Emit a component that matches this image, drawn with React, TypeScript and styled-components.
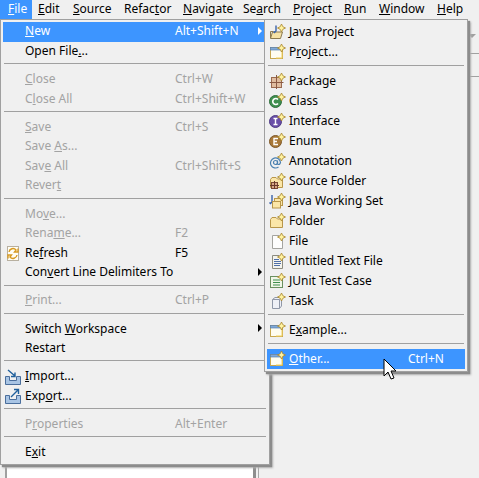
import React, { FunctionComponent } from 'react';
import styled, { createGlobalStyle } from 'styled-components';

const GlobalStyle = createGlobalStyle`
  html, body {
    margin: 0;
    padding: 0;
    height: 100%;
    background: #f0f0f0;
  }
`;

const Page = styled.div`
  position: relative;
  width: 479px;
  height: 478px;
  overflow: hidden;
  display: flex;
  flex-direction: column;
  background: #f0f0f0;
  font-family: 'Noto Sans', 'Liberation Sans', sans-serif;
  font-size: 12px;
  color: #000;
`;

const MenuBar = styled.div`
  display: flex;
  height: 19px;
  flex: none;
`;

const BarItem = styled.div<{ $active?: boolean; $width: number }>`
  width: ${(p) => p.$width}px;
  padding-left: ${(p) => (p.$active ? 8 : 6)}px;
  box-sizing: border-box;
  line-height: 18px;
  white-space: nowrap;
  background: ${(p) => (p.$active ? '#3d95ff' : 'transparent')};
  color: ${(p) => (p.$active ? '#fff' : '#000')};
`;

const Workspace = styled.div`
  flex: 1;
  display: flex;
  min-height: 0;
`;

const EditorColumn = styled.div`
  width: 251px;
  margin-left: 5px;
  box-sizing: border-box;
  background: #fff;
  border-left: 2px solid #a0a0a0;
  border-right: 3px solid #8e8e8e;
`;

const SideColumn = styled.div`
  flex: 1;
  margin-left: 2px;
  border-left: 1px solid #a8a8a8;
  display: flex;
  flex-direction: column;
  align-items: flex-end;
`;

const ViewTabs = styled.div`
  width: 12px;
  height: 34px;
  border-bottom: 1px solid #a0a0a0;
  position: relative;
`;

const ViewToolbar = styled.div`
  width: 12px;
  height: 22px;
  border-bottom: 1px solid #a0a0a0;
`;

const ViewMenuArrow = styled.div`
  position: absolute;
  left: 1px;
  top: 15px;
  border-left: 4px solid transparent;
  border-right: 4px solid transparent;
  border-top: 4px solid #a0a0a0;
`;

const Flyout = styled.div<{ $left: number; $width: number; $gutter: number }>`
  position: absolute;
  top: 19px;
  left: ${(p) => p.$left}px;
  width: ${(p) => p.$width}px;
  box-sizing: border-box;
  padding: 2px ${(p) => p.$gutter}px 2px;
  background: #f0f0f0;
  border: 1px solid #a0a0a0;
  box-shadow: 2px 2px 1px #8c8c8c, 3px 3px 2px #b4b4b4;
`;

const Row = styled.div<{ $height: number; $active?: boolean; $disabled?: boolean; $columns: string }>`
  position: relative;
  display: grid;
  grid-template-columns: ${(p) => p.$columns};
  align-items: center;
  height: ${(p) => p.$height}px;
  line-height: 17px;
  white-space: nowrap;
  background: ${(p) => (p.$active ? '#3d95ff' : 'transparent')};
  color: ${(p) => (p.$active ? '#fff' : p.$disabled ? '#a3a3a3' : '#000')};
`;

const IconSlot = styled.span`
  display: flex;
  align-items: center;
  padding-left: 2px;
  height: 16px;
`;

const Label = styled.span<{ $lift: number }>`
  padding-bottom: ${(p) => p.$lift}px;
`;

const Shortcut = styled.span<{ $lift: number }>`
  padding-bottom: ${(p) => p.$lift}px;
`;

const SubArrow = styled.span<{ $color: string; $right: number }>`
  position: absolute;
  right: ${(p) => p.$right}px;
  top: 50%;
  margin-top: -5px;
  border-top: 4px solid transparent;
  border-bottom: 4px solid transparent;
  border-left: 4px solid ${(p) => p.$color};
`;

const Separator = styled.div<{ $height: number; $inset: number; $offset: number }>`
  height: ${(p) => p.$height}px;
  padding-top: ${(p) => p.$offset}px;
  box-sizing: border-box;
  margin: 0 ${(p) => p.$inset}px;

  &::after {
    content: '';
    display: block;
    height: 1px;
    background: #a0a0a0;
  }
`;

const Pointer = styled.svg`
  position: absolute;
  left: 383px;
  top: 358px;
`;

// "Alt+&Shift" style: the character after & gets the mnemonic underline
const mnemonic = (text: string) => {
  const i = text.indexOf('&');
  if (i < 0) return text;
  return (
    <>
      {text.slice(0, i)}
      <u>{text[i + 1]}</u>
      {text.slice(i + 2)}
    </>
  );
};

const Star = () => (
  <path
    d="M12.5 0 L13.8 2.7 L16.5 4 L13.8 5.3 L12.5 8 L11.2 5.3 L8.5 4 L11.2 2.7 Z"
    fill="#fff3a0"
    stroke="#a8842a"
    strokeWidth="0.8"
  />
);

const Svg: FunctionComponent<{ children: React.ReactNode }> = ({ children }) => (
  <svg width="17" height="16" viewBox="0 0 17 16">
    {children}
  </svg>
);

const Ball: FunctionComponent<{ fill: string; edge: string; children: React.ReactNode }> = ({
  fill,
  edge,
  children,
}) => (
  <Svg>
    <circle cx="6.5" cy="8.5" r="6" fill={fill} stroke={edge} />
    {children}
    <Star />
  </Svg>
);

const WindowIcon = () => (
  <Svg>
    <rect x="1.5" y="3.5" width="12" height="11" fill="#fffdf0" stroke="#c8a850" />
    <rect x="1.5" y="3.5" width="10" height="2.5" fill="#7fa8d8" stroke="#5a80b0" strokeWidth="0.7" />
    <path d="M13 8 V14 H7" fill="none" stroke="#f0d060" />
    <Star />
  </Svg>
);

const FolderShape = () => (
  <path
    d="M1.5 14.5 V6.5 L3 4.5 H7 L8.5 6 H13.5 V14.5 Z"
    fill="#fbe6a8"
    stroke="#b8964a"
  />
);

const icons: Record<string, React.ReactNode> = {
  javaProject: (
    <Svg>
      <path d="M1.5 14.5 L3.5 8 H13.5 L11.5 14.5 Z" fill="#f6e2a6" stroke="#8c7a50" />
      <path d="M1.5 14 V7.5 H4" fill="none" stroke="#8c7a50" />
      <path d="M7 1.5 V7 L5.5 8.5 L4.5 7.5" fill="none" stroke="#3a62a8" strokeWidth="1.4" />
      <Star />
    </Svg>
  ),
  window: <WindowIcon />,
  package: (
    <Svg>
      <rect x="2.5" y="4.5" width="10" height="10" fill="#e0bda0" stroke="#9a6a50" />
      <path d="M7.5 2 V16 M0.5 9.5 H14.5" stroke="#8a5a44" />
      <Star />
    </Svg>
  ),
  cls: (
    <Ball fill="#3f8f4f" edge="#2e6e3c">
      <path d="M9 6.5 A3 3 0 1 0 9 10.5" fill="none" stroke="#fff" strokeWidth="1.6" />
    </Ball>
  ),
  iface: (
    <Ball fill="#6a4fa8" edge="#4f3a85">
      <path d="M4.5 5.5 H8.5 M6.5 5.5 V11.5 M4.5 11.5 H8.5" fill="none" stroke="#fff" strokeWidth="1.4" />
    </Ball>
  ),
  enumType: (
    <Ball fill="#a87838" edge="#7e5828">
      <path d="M9 5.5 H5 V11.5 H9 M5 8.5 H8" fill="none" stroke="#fff" strokeWidth="1.4" />
    </Ball>
  ),
  annotation: (
    <Svg>
      <circle cx="6.5" cy="9.5" r="2" fill="none" stroke="#4a80b0" strokeWidth="1.2" />
      <path d="M8.5 7.5 V11 Q10.5 12.5 11.5 9.5 A5 5 0 1 0 9.5 14" fill="none" stroke="#4a80b0" strokeWidth="1.2" />
      <Star />
    </Svg>
  ),
  sourceFolder: (
    <Svg>
      <FolderShape />
      <rect x="2.5" y="9.5" width="6" height="6" fill="#d8a888" stroke="#7a4a34" />
      <path d="M5.5 8 V16 M1 12.5 H10" stroke="#6a3a2a" />
      <Star />
    </Svg>
  ),
  workingSet: (
    <Svg>
      <path d="M3 2 V9 L1.5 10.5 L0.5 9.5" fill="none" stroke="#3a62a8" strokeWidth="1.4" />
      <rect x="5.5" y="5.5" width="8" height="7" fill="#fbe6a8" stroke="#b8964a" />
      <rect x="3.5" y="8.5" width="8" height="6.5" fill="#fbe6a8" stroke="#b8964a" />
      <Star />
    </Svg>
  ),
  folder: (
    <Svg>
      <FolderShape />
      <Star />
    </Svg>
  ),
  file: (
    <Svg>
      <path d="M3.5 2.5 H10 L13.5 6 V15.5 H3.5 Z" fill="#fdfdfd" stroke="#a4a4a0" />
      <Star />
    </Svg>
  ),
  textFile: (
    <Svg>
      <path d="M3.5 2.5 H10 L13.5 6 V15.5 H3.5 Z" fill="#f4f4ee" stroke="#8c8c80" />
      <path d="M5 6.5 H10 M5 8.5 H12 M5 10.5 H12 M5 12.5 H11" stroke="#5070a8" />
      <Star />
    </Svg>
  ),
  junit: (
    <Svg>
      <rect x="1.5" y="3.5" width="12" height="11" fill="#f0f6e8" stroke="#6a9060" />
      <path d="M4 7 H11 M4 9.5 H11 M4 12 H11" stroke="#3f8f4f" />
      <Star />
    </Svg>
  ),
  task: (
    <Svg>
      <path d="M3.5 6.5 L6 4.5 H12.5 V13 L10.5 15.5 H3.5 Z" fill="#eef0f6" stroke="#9098a8" />
      <path d="M3.5 6.5 H10.5 V15.5 M10.5 6.5 L12.5 4.5" fill="none" stroke="#9098a8" />
      <Star />
    </Svg>
  ),
  refresh: (
    <Svg>
      <rect x="2.5" y="1.5" width="11" height="14" fill="#fffdf4" stroke="#b8b0a0" />
      <path d="M4 7 A4 4 0 0 1 11 5 L9.5 7 H13 V3.5" fill="none" stroke="#d89a20" strokeWidth="1.4" />
      <path d="M12 10 A4 4 0 0 1 5 12 L6.5 10 H3 V13.5" fill="none" stroke="#d89a20" strokeWidth="1.4" />
    </Svg>
  ),
  importIcon: (
    <Svg>
      <path d="M0.5 7.5 H4.5 V11.5 H11.5 V7.5 H15.5 V15.5 H0.5 Z" fill="#a8c4e4" stroke="#4a6e9c" />
      <path d="M3 1 L10 7 M10 3.5 V7.5 H6" fill="none" stroke="#1f5f9c" strokeWidth="1.4" />
    </Svg>
  ),
  exportIcon: (
    <Svg>
      <path d="M0.5 7.5 H4.5 V11.5 H11.5 V7.5 H15.5 V15.5 H0.5 Z" fill="#a8c4e4" stroke="#4a6e9c" />
      <path d="M6 9 L13 2 M9 1.5 H13.5 V6" fill="none" stroke="#1f5f9c" strokeWidth="1.4" />
    </Svg>
  ),
};

interface MenuEntry {
  label?: string;
  icon?: string;
  shortcut?: string;
  disabled?: boolean;
  active?: boolean;
  submenu?: boolean;
}

const SEP: MenuEntry = {};

const barItems = [
  { label: '&File', width: 32, active: true },
  { label: '&Edit', width: 35 },
  { label: '&Source', width: 51 },
  { label: 'Refac&tor', width: 59 },
  { label: '&Navigate', width: 60 },
  { label: 'Se&arch', width: 50 },
  { label: '&Project', width: 51 },
  { label: '&Run', width: 35 },
  { label: '&Window', width: 58 },
  { label: '&Help', width: 40 },
];

const fileEntries: MenuEntry[] = [
  { label: '&New', shortcut: 'Alt+Shift+N', active: true, submenu: true },
  { label: 'Open File&...' },
  SEP,
  { label: '&Close', shortcut: 'Ctrl+W', disabled: true },
  { label: 'C&lose All', shortcut: 'Ctrl+Shift+W', disabled: true },
  SEP,
  { label: '&Save', shortcut: 'Ctrl+S', disabled: true },
  { label: 'Save &As...', disabled: true },
  { label: 'Sav&e All', shortcut: 'Ctrl+Shift+S', disabled: true },
  { label: 'Rever&t', disabled: true },
  SEP,
  { label: 'Mo&ve...', disabled: true },
  { label: 'Rena&me...', shortcut: 'F2', disabled: true },
  { label: 'Re&fresh', shortcut: 'F5', icon: 'refresh' },
  { label: 'Con&vert Line Delimiters To', submenu: true },
  SEP,
  { label: '&Print...', shortcut: 'Ctrl+P', disabled: true },
  SEP,
  { label: 'Switch &Workspace', submenu: true },
  { label: 'Restart' },
  SEP,
  { label: '&Import...', icon: 'importIcon' },
  { label: 'Exp&ort...', icon: 'exportIcon' },
  SEP,
  { label: 'P&roperties', shortcut: 'Alt+Enter', disabled: true },
  SEP,
  { label: 'E&xit' },
];

const newEntries: MenuEntry[] = [
  { label: 'Java Project', icon: 'javaProject' },
  { label: 'P&roject...', icon: 'window' },
  SEP,
  { label: 'Package', icon: 'package' },
  { label: 'Class', icon: 'cls' },
  { label: 'Interface', icon: 'iface' },
  { label: 'Enum', icon: 'enumType' },
  { label: 'Annotation', icon: 'annotation' },
  { label: 'Source Folder', icon: 'sourceFolder' },
  { label: 'Java Working Set', icon: 'workingSet' },
  { label: 'Folder', icon: 'folder' },
  { label: 'File', icon: 'file' },
  { label: 'Untitled Text File', icon: 'textFile' },
  { label: 'JUnit Test Case', icon: 'junit' },
  { label: 'Task', icon: 'task' },
  SEP,
  { label: 'E&xample...', icon: 'window' },
  SEP,
  { label: '&Other...', shortcut: 'Ctrl+N', icon: 'window', active: true },
];

interface MenuProps {
  entries: MenuEntry[];
  left: number;
  width: number;
  rowHeight: number;
  textLift: number;
  sepHeight: number;
  sepOffset: number;
  columns: string;
}

const Menu: FunctionComponent<MenuProps> = ({
  entries,
  left,
  width,
  rowHeight,
  textLift,
  sepHeight,
  sepOffset,
  columns,
}) => (
  <Flyout $left={left} $width={width} $gutter={2}>
    {entries.map((entry, i) =>
      entry.label ? (
        <Row
          key={i}
          $height={rowHeight}
          $active={entry.active}
          $disabled={entry.disabled}
          $columns={columns}
        >
          <IconSlot>{entry.icon && icons[entry.icon]}</IconSlot>
          <Label $lift={textLift}>{mnemonic(entry.label)}</Label>
          <Shortcut $lift={textLift}>{entry.shortcut}</Shortcut>
          {entry.submenu && <SubArrow $right={5} $color={entry.active ? '#fff' : '#000'} />}
        </Row>
      ) : (
        <Separator key={i} $height={sepHeight} $offset={sepOffset} $inset={1} />
      ),
    )}
  </Flyout>
);

export default function App() {
  return (
    <Page>
      <GlobalStyle />
      <MenuBar>
        {barItems.map((item) => (
          <BarItem key={item.label} $active={item.active} $width={item.width}>
            {mnemonic(item.label)}
          </BarItem>
        ))}
      </MenuBar>
      <Workspace>
        <EditorColumn />
        <SideColumn>
          <ViewTabs>
            <ViewMenuArrow />
          </ViewTabs>
          <ViewToolbar />
        </SideColumn>
      </Workspace>
      <Menu
        entries={fileEntries}
        left={0}
        width={270}
        rowHeight={19.6}
        textLift={2}
        sepHeight={8.5}
        sepOffset={2}
        columns="22px 150px 1fr"
      />
      <Menu
        entries={newEntries}
        left={264}
        width={204}
        rowHeight={20}
        textLift={1}
        sepHeight={9}
        sepOffset={3}
        columns="22px 119px 1fr"
      />
      <Pointer width="16" height="24" viewBox="0 0 16 24">
        <path
          d="M1 1 V18 L5 14 L8 21 L11 20 L8 13 H13 Z"
          fill="#fff"
          stroke="#000"
          strokeWidth="1"
        />
      </Pointer>
    </Page>
  );
}
